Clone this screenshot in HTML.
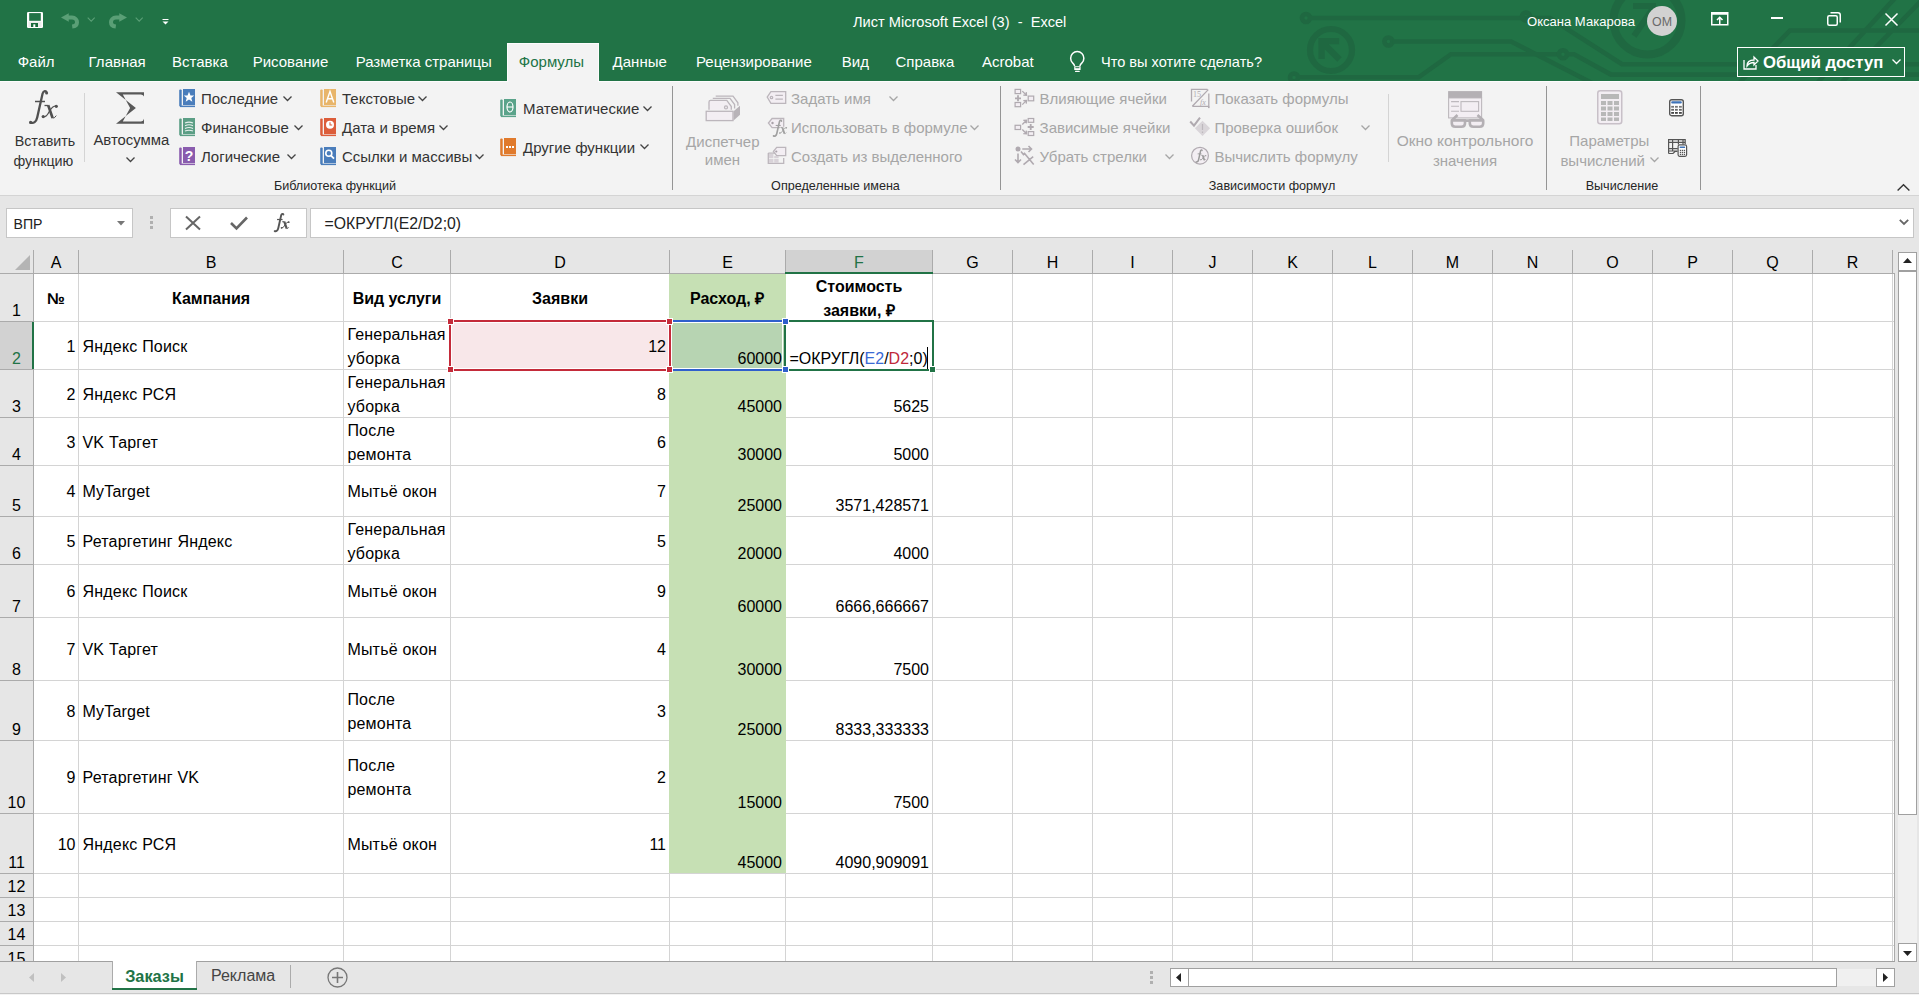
<!DOCTYPE html><html><head><meta charset="utf-8"><style>
*{margin:0;padding:0;box-sizing:border-box}
html,body{width:1919px;height:995px;overflow:hidden}
body{position:relative;background:#fff;font-family:"Liberation Sans",sans-serif;color:#000}
.a{position:absolute}
.t{position:absolute;white-space:pre;line-height:1}
svg{position:absolute;overflow:visible}
</style></head><body>
<div class="a" style="left:0px;top:0px;width:1919px;height:81px;background:#217346;"></div>
<div class="a" style="left:0px;top:81px;width:1919px;height:1px;background:#fdfcfd;"></div>
<div class="a" style="left:0px;top:82px;width:1919px;height:113px;background:#f3f3f3;"></div>
<div class="a" style="left:0px;top:195px;width:1919px;height:1px;background:#d4d4d4;"></div>
<div class="a" style="left:0px;top:196px;width:1919px;height:799px;background:#e6e6e6;"></div>
<svg style="left:0;top:0;overflow:hidden" width="1919" height="81"><g fill="none" stroke="#1f6841" stroke-width="4.6">
<circle cx="1306" cy="18" r="4"/><path d="M1310 18H1550L1622 64.2H1919"/><circle cx="1526" cy="16.5" r="4"/>
<circle cx="1331" cy="50" r="21" stroke-width="6.2"/>
<path d="M1321.6 38V59M1318.4 41.2H1339.2M1322 42L1339.5 59.5" stroke-width="6.3"/>
<circle cx="1647.5" cy="20.5" r="34" stroke-width="8"/>
<path d="M1633 6H1656M1654 7L1634 36" stroke-width="6"/>
<circle cx="1388.4" cy="41.5" r="4"/><path d="M1392.5 41.5H1511L1592 83"/>
<circle cx="1294" cy="77.5" r="4"/><path d="M1298 77.3H1418.6L1451 54.2H1558"/>
<circle cx="1563" cy="54.3" r="4"/><path d="M1567 54.3H1574L1611 74.6H1919"/>
<path d="M1740 82L1790 30.5H1919M1896 -3L1818 82M1922 0L1842 82"/>
</g></svg>
<svg style="left:27px;top:12px" width="16" height="16"><rect x="0" y="0" width="16" height="16" rx="1.2" fill="#fff"/><rect x="2.2" y="1.1" width="11.6" height="7.7" fill="#217346"/><rect x="1.5" y="9.6" width="13" height="5.3" fill="#ececec"/><rect x="4" y="11" width="7" height="4" fill="#1a6b3c"/><rect x="6.3" y="12.3" width="2" height="2.7" fill="#fff"/></svg>
<svg style="left:60px;top:12px" width="20" height="18"><path d="M1 5.5L8.75 1.3V9.8Z" fill="#5a9f76"/><path d="M7 5.6H12C15.3 5.6 17 8 17 10.2C17 12.6 15.4 14.2 12.2 14.6" fill="none" stroke="#5a9f76" stroke-width="4"/></svg>
<svg style="left:108px;top:12px" width="20" height="18"><g transform="translate(20,0) scale(-1,1)"><path d="M1 5.5L8.75 1.3V9.8Z" fill="#5a9f76"/><path d="M7 5.6H12C15.3 5.6 17 8 17 10.2C17 12.6 15.4 14.2 12.2 14.6" fill="none" stroke="#5a9f76" stroke-width="4"/></g></svg>
<svg style="left:87px;top:17px" width="9" height="6"><path d="M0.7 0.7L4.2 4.2L7.7 0.7" fill="none" stroke="#5a9f76" stroke-width="1.1"/></svg>
<svg style="left:135px;top:17px" width="9" height="6"><path d="M0.7 0.7L4.2 4.2L7.7 0.7" fill="none" stroke="#5a9f76" stroke-width="1.1"/></svg>
<svg style="left:162px;top:18px" width="8" height="8"><rect x="0.5" y="1" width="6" height="1" fill="#fff"/><path d="M0.5 3.5H6.5L3.5 6.5Z" fill="#fff"/></svg>
<div class="t" style="left:853px;top:14.64px;font-size:14.6px;color:#fff;font-weight:400;">Лист Microsoft Excel (3)  -  Excel</div>
<div class="t" style="left:1527px;top:14.95px;font-size:13.05px;color:#fff;font-weight:400;">Оксана Макарова</div>
<div class="a" style="left:1647px;top:6px;width:30px;height:30px;border-radius:50%;background:#d2d2d2"></div>
<div class="t" style="left:1262px;width:800px;top:15.50px;font-size:12.4px;color:#6a6a6a;font-weight:400;text-align:center;">OM</div>
<svg style="left:1711px;top:12px" width="18" height="14"><rect x="0.75" y="0.75" width="16" height="12" fill="none" stroke="#fff" stroke-width="1.5"/><rect x="0.75" y="0.75" width="16" height="2" fill="#fff"/><path d="M8.75 12.5V5.5M6 8L8.75 5.2L11.5 8" fill="none" stroke="#fff" stroke-width="1.5"/></svg>
<div class="a" style="left:1771px;top:17px;width:12px;height:1.5px;background:#fff;"></div>
<svg style="left:1827px;top:12px" width="14" height="14"><rect x="0.75" y="3.75" width="9.5" height="9.5" rx="1.5" fill="none" stroke="#fff" stroke-width="1.5"/><path d="M3.5 0.75H11Q13.25 0.75 13.25 3V10.5" fill="none" stroke="#fff" stroke-width="1.5"/></svg>
<svg style="left:1885px;top:13px" width="13" height="13"><path d="M0.5 0.5L12.5 12.5M12.5 0.5L0.5 12.5" stroke="#fff" stroke-width="1.5"/></svg>
<div class="a" style="left:507px;top:43px;width:92px;height:39px;background:#fdfcfd;"></div>
<div class="a" style="left:508px;top:44px;width:90px;height:38px;background:#f3f3f3;"></div>
<div class="t" style="left:17.7px;top:54.30px;font-size:15px;color:#fff;font-weight:400;">Файл</div>
<div class="t" style="left:88.6px;top:54.30px;font-size:15px;color:#fff;font-weight:400;">Главная</div>
<div class="t" style="left:172px;top:54.30px;font-size:15px;color:#fff;font-weight:400;">Вставка</div>
<div class="t" style="left:252.7px;top:54.30px;font-size:15px;color:#fff;font-weight:400;">Рисование</div>
<div class="t" style="left:355.7px;top:54.30px;font-size:15px;color:#fff;font-weight:400;">Разметка страницы</div>
<div class="t" style="left:518.8px;top:54.30px;font-size:15px;color:#217346;font-weight:400;">Формулы</div>
<div class="t" style="left:612.6px;top:54.30px;font-size:15px;color:#fff;font-weight:400;">Данные</div>
<div class="t" style="left:696px;top:54.30px;font-size:15px;color:#fff;font-weight:400;">Рецензирование</div>
<div class="t" style="left:841.8px;top:54.30px;font-size:15px;color:#fff;font-weight:400;">Вид</div>
<div class="t" style="left:895.5px;top:54.30px;font-size:15px;color:#fff;font-weight:400;">Справка</div>
<div class="t" style="left:982px;top:54.30px;font-size:15px;color:#fff;font-weight:400;">Acrobat</div>
<svg style="left:1068px;top:50px" width="19" height="23"><path d="M6.6 16.3Q6.5 14.6 4.6 12.9A6.6 6.6 0 1 1 13.9 12.9Q12 14.6 11.9 16.3" fill="none" stroke="#fff" stroke-width="1.5"/><rect x="6.2" y="16.2" width="6.4" height="3.7" rx="0.5" fill="#fff"/><rect x="7.4" y="17.2" width="4" height="1" fill="#217346"/><rect x="7" y="20.8" width="4.8" height="1.3" rx="0.6" fill="#fff"/></svg>
<div class="t" style="left:1101px;top:54.67px;font-size:14.57px;color:#fff;font-weight:400;">Что вы хотите сделать?</div>
<div class="a" style="left:1737px;top:47px;width:168px;height:30px;border:1px solid #fff;background:#217346"></div>
<svg style="left:1743px;top:54px" width="16" height="16"><path d="M1 6V15H13V11" fill="none" stroke="#fff" stroke-width="1.3"/><path d="M4 12Q4 6 11 6V3L15 7L11 11V8.5Q6.5 8.5 4 12Z" fill="none" stroke="#fff" stroke-width="1.3"/></svg>
<div class="t" style="left:1763px;top:55.16px;font-size:16.7px;color:#fff;font-weight:700;">Общий доступ</div>
<svg style="left:1892px;top:59px" width="9" height="6"><path d="M0.5 0.5L4.5 4.5L8.5 0.5" fill="none" stroke="#fff" stroke-width="1.3"/></svg>
<svg style="left:24px;top:86px" width="40" height="44"><g fill="none" stroke="#505050"><path d="M22.8 6.6C22 4.6 19.6 4.6 18.6 7.5L13.2 31.5C12.3 35.8 9.4 37.8 6.5 36.5" stroke-width="2.3"/><path d="M11 15.5H21" stroke-width="1.5"/><path d="M24.2 19.3L28.6 32" stroke-width="2.6"/><path d="M20.5 19.5H24.5" stroke-width="1.3"/><path d="M28.6 32Q30.2 32.8 32.3 29.6" stroke-width="1.0"/><path d="M32.5 19.8Q28.5 19.5 25.3 25.5Q22.5 31.2 19 31" stroke-width="1.2"/></g><g fill="#505050"><circle cx="22.6" cy="6.9" r="1.5"/><circle cx="6.6" cy="36.4" r="1.6"/><circle cx="32.3" cy="20.3" r="1.6"/><circle cx="19.2" cy="30.6" r="1.6"/></g></svg>
<div class="t" style="left:14.7px;top:133.90px;font-size:14.3px;color:#333333;font-weight:400;">Вставить</div>
<div class="t" style="left:13.5px;top:153.90px;font-size:14.3px;color:#333333;font-weight:400;">функцию</div>
<div class="a" style="left:84px;top:93px;width:1px;height:69px;background:#d4d4d4;"></div>
<svg style="left:116px;top:92px" width="29" height="32"><path d="M0 0.2H28V4.6Q27.5 2.6 25 2.4H6.8L14.1 15.9L6.8 29.4H25Q27.5 29.2 28 26.7V31.8H0L19.9 15.9Z" fill="#585858"/></svg>
<div class="t" style="left:93.4px;top:133.39px;font-size:14.9px;color:#333333;font-weight:400;">Автосумма</div>
<svg style="left:126px;top:157px" width="9" height="6"><path d="M0.5 0.5L4.5 4.5L8.5 0.5" fill="none" stroke="#444" stroke-width="1.3"/></svg>
<svg style="left:179px;top:89px" width="17" height="19"><rect x="0.2" y="0.5" width="2.5" height="17" rx="1" fill="#4a7dbb"/><rect x="4" y="0" width="12" height="16" fill="#4a7dbb"/><rect x="1" y="16.6" width="15" height="1.5" fill="#4a7dbb"/><path d="M10 2.8L11.5 6.4L15.2 6.6L12.3 9L13.3 12.7L10 10.6L6.7 12.7L7.7 9L4.8 6.6L8.5 6.4Z" fill="#fff"/></svg>
<div class="t" style="left:201px;top:91.30px;font-size:15px;color:#333333;font-weight:400;">Последние</div>
<svg style="left:283px;top:96px" width="9" height="6"><path d="M0.5 0.5L4.5 4.5L8.5 0.5" fill="none" stroke="#444" stroke-width="1.3"/></svg>
<svg style="left:179px;top:118px" width="17" height="19"><rect x="0.2" y="0.5" width="2.5" height="17" rx="1" fill="#5b9e85"/><rect x="4" y="0" width="12" height="16" fill="#5b9e85"/><rect x="1" y="16.6" width="15" height="1.5" fill="#5b9e85"/><g fill="none" stroke="#fff" stroke-width="1.1" opacity="0.85"><path d="M6 5Q10 3.2 14 5M6 7.7Q10 5.9 14 7.7M6 10.4Q10 8.6 14 10.4M6 13.1Q10 11.3 14 13.1"/></g></svg>
<div class="t" style="left:201px;top:120.30px;font-size:15px;color:#333333;font-weight:400;">Финансовые</div>
<svg style="left:294px;top:125px" width="9" height="6"><path d="M0.5 0.5L4.5 4.5L8.5 0.5" fill="none" stroke="#444" stroke-width="1.3"/></svg>
<svg style="left:179px;top:147px" width="17" height="19"><rect x="0.2" y="0.5" width="2.5" height="17" rx="1" fill="#8a5cae"/><rect x="4" y="0" width="12" height="16" fill="#8a5cae"/><rect x="1" y="16.6" width="15" height="1.5" fill="#8a5cae"/><text x="10" y="14" font-size="14" font-weight="700" fill="#fff" text-anchor="middle" font-family="Liberation Sans">?</text></svg>
<div class="t" style="left:201px;top:149.30px;font-size:15px;color:#333333;font-weight:400;">Логические</div>
<svg style="left:287px;top:154px" width="9" height="6"><path d="M0.5 0.5L4.5 4.5L8.5 0.5" fill="none" stroke="#444" stroke-width="1.3"/></svg>
<svg style="left:320px;top:89px" width="17" height="19"><rect x="0.2" y="0.5" width="2.5" height="17" rx="1" fill="#e8b56a"/><rect x="4" y="0" width="12" height="16" fill="#e8b56a"/><rect x="1" y="16.6" width="15" height="1.5" fill="#e8b56a"/><path d="M6.2 13.5L10 2.5L13.8 13.5M7.6 9.8H12.4" fill="none" stroke="#fff" stroke-width="1.4"/></svg>
<div class="t" style="left:342px;top:91.30px;font-size:15px;color:#333333;font-weight:400;">Текстовые</div>
<svg style="left:418px;top:96px" width="9" height="6"><path d="M0.5 0.5L4.5 4.5L8.5 0.5" fill="none" stroke="#444" stroke-width="1.3"/></svg>
<svg style="left:320px;top:118px" width="17" height="19"><rect x="0.2" y="0.5" width="2.5" height="17" rx="1" fill="#dc5d3a"/><rect x="4" y="0" width="12" height="16" fill="#dc5d3a"/><rect x="1" y="16.6" width="15" height="1.5" fill="#dc5d3a"/><circle cx="10" cy="6.8" r="4" fill="#fff"/><path d="M10 4.2V7H12.2" fill="none" stroke="#dc5d3a" stroke-width="1.1"/></svg>
<div class="t" style="left:342px;top:120.30px;font-size:15px;color:#333333;font-weight:400;">Дата и время</div>
<svg style="left:439px;top:125px" width="9" height="6"><path d="M0.5 0.5L4.5 4.5L8.5 0.5" fill="none" stroke="#444" stroke-width="1.3"/></svg>
<svg style="left:320px;top:147px" width="17" height="19"><rect x="0.2" y="0.5" width="2.5" height="17" rx="1" fill="#4a7dbb"/><rect x="4" y="0" width="12" height="16" fill="#4a7dbb"/><rect x="1" y="16.6" width="15" height="1.5" fill="#4a7dbb"/><circle cx="8.8" cy="6.3" r="3" fill="none" stroke="#fff" stroke-width="1.6"/><path d="M10.8 8.4L14 11.6" stroke="#fff" stroke-width="1.8"/></svg>
<div class="t" style="left:342px;top:149.30px;font-size:15px;color:#333333;font-weight:400;">Ссылки и массивы</div>
<svg style="left:475px;top:154px" width="9" height="6"><path d="M0.5 0.5L4.5 4.5L8.5 0.5" fill="none" stroke="#444" stroke-width="1.3"/></svg>
<svg style="left:500px;top:99px" width="17" height="19"><rect x="0.2" y="0.5" width="2.5" height="17" rx="1" fill="#5aa38a"/><rect x="4" y="0" width="12" height="16" fill="#5aa38a"/><rect x="1" y="16.6" width="15" height="1.5" fill="#5aa38a"/><ellipse cx="10" cy="8" rx="3" ry="5" fill="none" stroke="#fff" stroke-width="1.2"/><path d="M7 8H13" stroke="#fff" stroke-width="1.1"/></svg>
<div class="t" style="left:523px;top:101.30px;font-size:15px;color:#333333;font-weight:400;">Математические</div>
<svg style="left:643px;top:106px" width="9" height="6"><path d="M0.5 0.5L4.5 4.5L8.5 0.5" fill="none" stroke="#444" stroke-width="1.3"/></svg>
<svg style="left:500px;top:138px" width="17" height="19"><rect x="0.2" y="0.5" width="2.5" height="17" rx="1" fill="#e07a2c"/><rect x="4" y="0" width="12" height="16" fill="#e07a2c"/><rect x="1" y="16.6" width="15" height="1.5" fill="#e07a2c"/><path d="M6 8h2v2h-2zM9 8h2v2h-2zM12 8h2v2h-2z" fill="#fff"/></svg>
<div class="t" style="left:523px;top:139.80px;font-size:15px;color:#333333;font-weight:400;">Другие функции</div>
<svg style="left:640px;top:144px" width="9" height="6"><path d="M0.5 0.5L4.5 4.5L8.5 0.5" fill="none" stroke="#444" stroke-width="1.3"/></svg>
<div class="t" style="left:-65px;width:800px;top:180.33px;font-size:12.6px;color:#262626;font-weight:400;text-align:center;">Библиотека функций</div>
<div class="a" style="left:672px;top:86px;width:1px;height:104px;background:#959595;"></div>
<svg style="left:700px;top:88px" width="45" height="36"><g fill="none" stroke="#bcb6bc" stroke-width="1.3">
<path d="M15.7 8.2H33L37.9 14.8V17.7"/><path d="M12.8 10.3H30L34.6 16.5V20.6"/>
<path d="M9 21.8V14Q9 12.4 10.6 12.4H26.8L31.3 18.5V21.8" fill="#f3eef3"/><circle cx="26" cy="19.4" r="1.5"/>
<rect x="6.2" y="23.3" width="26.8" height="9.3" fill="#f3eef3"/></g><path d="M33.6 23.3L40 17.7V26.8L33.6 32.6Z" fill="#b8b3b8"/></svg>
<div class="t" style="left:322.79999999999995px;width:800px;top:133.60px;font-size:15px;color:#a6a6a6;font-weight:400;text-align:center;">Диспетчер</div>
<div class="t" style="left:322.5px;width:800px;top:152.30px;font-size:15px;color:#a6a6a6;font-weight:400;text-align:center;">имен</div>
<svg style="left:700px;top:88px" width="90" height="80"><g stroke="#bcb6bc" stroke-width="1.3">
<path d="M67.2 9.1L70.9 3.7H85.7V15.3H70.9Z" fill="#f3eef3"/><circle cx="71.5" cy="9.5" r="1.2" fill="none"/><path d="M75.4 7.4H82.9M75.4 11.1H82.9"/>
<path d="M80 39.6H72.1L68.4 35L72.1 30.5H83.7V38.7" fill="#f3eef3"/>
<path d="M68.3 65.1H76M68.3 65.1V75.4H83.7V70" fill="none"/>
<path d="M73.4 63.5L76.7 59.4H85.7V67.6H76.7Z" fill="#f3eef3"/></g>
<circle cx="72.5" cy="35" r="1.2" fill="#a8a0a8"/><circle cx="76.3" cy="63.5" r="1.1" fill="#a8a0a8"/>
<g fill="#d8d2d8"><rect x="69" y="65.8" width="4.4" height="4.4"/><rect x="74.2" y="68" width="4.4" height="2.2"/><rect x="69" y="71" width="4.4" height="3.8"/><rect x="74.2" y="71" width="4.4" height="3.8"/></g>
<g transform="translate(70.2,29.7) scale(0.5)"><g fill="none" stroke="#a0a0a0"><path d="M22.8 6.6C22 4.6 19.6 4.6 18.6 7.5L13.2 31.5C12.3 35.8 9.4 37.8 6.5 36.5" stroke-width="3.2199999999999998"/><path d="M11 15.5H21" stroke-width="2.0999999999999996"/><path d="M24.2 19.3L28.6 32" stroke-width="3.6399999999999997"/><path d="M20.5 19.5H24.5" stroke-width="1.8199999999999998"/><path d="M28.6 32Q30.2 32.8 32.3 29.6" stroke-width="1.4"/><path d="M32.5 19.8Q28.5 19.5 25.3 25.5Q22.5 31.2 19 31" stroke-width="1.68"/></g><g fill="#a0a0a0"><circle cx="22.6" cy="6.9" r="1.5"/><circle cx="6.6" cy="36.4" r="1.6"/><circle cx="32.3" cy="20.3" r="1.6"/><circle cx="19.2" cy="30.6" r="1.6"/></g></g></svg>
<div class="t" style="left:791px;top:91.30px;font-size:15px;color:#a6a6a6;font-weight:400;">Задать имя</div>
<svg style="left:889px;top:96px" width="9" height="6"><path d="M0.5 0.5L4.5 4.5L8.5 0.5" fill="none" stroke="#a6a6a6" stroke-width="1.3"/></svg>
<div class="t" style="left:791px;top:120.30px;font-size:15px;color:#a6a6a6;font-weight:400;">Использовать в формуле</div>
<svg style="left:970px;top:125px" width="9" height="6"><path d="M0.5 0.5L4.5 4.5L8.5 0.5" fill="none" stroke="#a6a6a6" stroke-width="1.3"/></svg>
<div class="t" style="left:791px;top:149.30px;font-size:15px;color:#a6a6a6;font-weight:400;">Создать из выделенного</div>
<div class="t" style="left:435.5px;width:800px;top:180.33px;font-size:12.6px;color:#262626;font-weight:400;text-align:center;">Определенные имена</div>
<div class="a" style="left:1000px;top:86px;width:1px;height:104px;background:#959595;"></div>
<svg style="left:1010px;top:86px" width="30" height="84"><g fill="#f3eef3" stroke="#b0aab0" stroke-width="1.2">
<rect x="5.1" y="3.4" width="5.5" height="4.2"/><rect x="5.1" y="16.5" width="5.5" height="4.2"/><rect x="18.2" y="10.1" width="5.5" height="4.7"/>
<rect x="5.1" y="39.3" width="5.5" height="4.2"/><rect x="18.2" y="32.5" width="5.5" height="3.8"/><rect x="18.2" y="45.6" width="5.5" height="3.9"/></g>
<g fill="none" stroke="#b0aab0" stroke-width="1.3">
<path d="M12.3 5.1L16.5 9.3M13.31 9.03L16.5 9.3L16.23 6.11"/><path d="M12.3 18.6L16.5 14.4M16.23 17.59L16.5 14.4L13.31 14.67"/>
<path d="M12.3 38.5L16.5 34.2M16.23 37.39L16.5 34.2L13.31 34.47"/><path d="M12.3 43.5L16.5 47.8M13.31 47.53L16.5 47.8L16.23 44.61"/>
</g><g stroke="#b0aab0" stroke-width="1.8" fill="none"><path d="M5 12.3H11M8 9.3V15.3"/><path d="M17.7 41H23.7M20.7 38V44"/>
<path d="M12.3 63H21.5M18.5 60L21.5 63L18.5 66M8 67.6V76.5M5 73.5L8 76.5L11 73.5M11 65.5L14 69.3M13.5 78.6L23.2 70.6M14 66.8L23.7 78.6" stroke-width="1.6"/></g>
<circle cx="8" cy="63" r="2.5" fill="#b0aab0"/></svg>
<div class="t" style="left:1039.6px;top:91.30px;font-size:15px;color:#a6a6a6;font-weight:400;">Влияющие ячейки</div>
<div class="t" style="left:1039.6px;top:120.30px;font-size:15px;color:#a6a6a6;font-weight:400;">Зависимые ячейки</div>
<div class="t" style="left:1039.6px;top:149.30px;font-size:15px;color:#a6a6a6;font-weight:400;">Убрать стрелки</div>
<svg style="left:1165px;top:154px" width="9" height="6"><path d="M0.5 0.5L4.5 4.5L8.5 0.5" fill="none" stroke="#a6a6a6" stroke-width="1.3"/></svg>
<svg style="left:1186px;top:86px" width="30" height="84"><g fill="none" stroke="#b0aab0" stroke-width="1.3">
<path d="M5.5 15.6V3.4H21.5M6.3 20.3H22.8V7.6M6.3 20.3L22.3 3.6"/></g>
<text x="7" y="11" font-size="8" fill="#b0aab0" font-family="Liberation Serif">15</text>
<text x="14" y="18.5" font-size="8" font-style="italic" fill="#b0aab0" font-family="Liberation Serif">fx</text>
<rect x="22" y="20.5" width="1.6" height="1.6" fill="#b0aab0"/>
<path d="M4.2 35.5L8 39.7L14 31.7" fill="none" stroke="#b0aab0" stroke-width="2"/>
<path d="M16.5 34.7L24.1 42.3L16.5 49.9L8.9 42.3Z" fill="#d9d5d9"/><path d="M16.5 38V44M16.5 45.6V47" stroke="#bdb8bd" stroke-width="1.2"/>
<circle cx="14" cy="69.7" r="8.4" fill="#f3eef3" stroke="#b0aab0" stroke-width="1.2"/>
<g transform="translate(7.5,62) scale(0.38)"><g fill="none" stroke="#9a9a9a"><path d="M22.8 6.6C22 4.6 19.6 4.6 18.6 7.5L13.2 31.5C12.3 35.8 9.4 37.8 6.5 36.5" stroke-width="3.9099999999999997"/><path d="M11 15.5H21" stroke-width="2.55"/><path d="M24.2 19.3L28.6 32" stroke-width="4.42"/><path d="M20.5 19.5H24.5" stroke-width="2.21"/><path d="M28.6 32Q30.2 32.8 32.3 29.6" stroke-width="1.7"/><path d="M32.5 19.8Q28.5 19.5 25.3 25.5Q22.5 31.2 19 31" stroke-width="2.04"/></g><g fill="#9a9a9a"><circle cx="22.6" cy="6.9" r="1.5"/><circle cx="6.6" cy="36.4" r="1.6"/><circle cx="32.3" cy="20.3" r="1.6"/><circle cx="19.2" cy="30.6" r="1.6"/></g></g></svg>
<div class="t" style="left:1214.4px;top:91.30px;font-size:15px;color:#a6a6a6;font-weight:400;">Показать формулы</div>
<div class="t" style="left:1214.4px;top:120.30px;font-size:15px;color:#a6a6a6;font-weight:400;">Проверка ошибок</div>
<svg style="left:1361px;top:125px" width="9" height="6"><path d="M0.5 0.5L4.5 4.5L8.5 0.5" fill="none" stroke="#a6a6a6" stroke-width="1.3"/></svg>
<div class="t" style="left:1214.4px;top:149.30px;font-size:15px;color:#a6a6a6;font-weight:400;">Вычислить формулу</div>
<div class="t" style="left:872px;width:800px;top:180.33px;font-size:12.6px;color:#262626;font-weight:400;text-align:center;">Зависимости формул</div>
<div class="a" style="left:1388px;top:94px;width:1px;height:68px;background:#d4d4d4;"></div>
<svg style="left:1440px;top:86px" width="50" height="44"><rect x="8.6" y="11.9" width="33" height="20" fill="#f3eef3" stroke="#bdb8bd" stroke-width="1.1"/><rect x="8.1" y="5.1" width="34" height="6.8" fill="#b4b0b4"/><path d="M11.1 15.6H19M11.1 20.3H19M11.1 25.3H19" stroke="#bdb8bd" stroke-width="1.1"/><rect x="21" y="15.6" width="17.6" height="9.7" fill="none" stroke="#bdb8bd" stroke-width="1.1"/><g fill="#f3eef3" stroke="#b4b0b4" stroke-width="2.6" stroke-linejoin="round"><path d="M17.5 29L12 34.2M37.5 29L43.2 34.2M25 34.6H29.8" fill="none"/><path d="M11.8 34.4H25V37.2Q25 40.8 21.4 40.8H15.4Q11.8 40.8 11.8 37.2Z"/><path d="M29.8 34.4H43.2V37.2Q43.2 40.8 39.6 40.8H33.4Q29.8 40.8 29.8 37.2Z"/></g></svg>
<div class="t" style="left:1065px;width:800px;top:132.88px;font-size:15.5px;color:#a6a6a6;font-weight:400;text-align:center;">Окно контрольного</div>
<div class="t" style="left:1065px;width:800px;top:153.00px;font-size:15px;color:#a6a6a6;font-weight:400;text-align:center;">значения</div>
<div class="a" style="left:1546px;top:86px;width:1px;height:104px;background:#959595;"></div>
<svg style="left:1597px;top:90px" width="26" height="35"><rect x="0.75" y="0.75" width="24" height="33" rx="2.5" fill="#f3eef3" stroke="#c8c0c8" stroke-width="1.5"/><rect x="4" y="4" width="18" height="5" fill="#b8b8b8"/><g fill="#b8b8b8"><rect x="4" y="11" width="5" height="4"/><rect x="10.5" y="11" width="5" height="4"/><rect x="17" y="11" width="5" height="4"/><rect x="4" y="16.5" width="5" height="4"/><rect x="10.5" y="16.5" width="5" height="4"/><rect x="17" y="16.5" width="5" height="4"/><rect x="4" y="22" width="5" height="4"/><rect x="10.5" y="22" width="5" height="4"/><rect x="17" y="22" width="5" height="4"/><rect x="4" y="27.5" width="5" height="3.5"/><rect x="10.5" y="27.5" width="5" height="3.5"/><rect x="17" y="27.5" width="5" height="3.5"/></g></svg>
<div class="t" style="left:1209.3px;width:800px;top:133.30px;font-size:15px;color:#a6a6a6;font-weight:400;text-align:center;">Параметры</div>
<div class="t" style="left:1202.7px;width:800px;top:153.30px;font-size:15px;color:#a6a6a6;font-weight:400;text-align:center;">вычислений</div>
<svg style="left:1650px;top:157px" width="9" height="6"><path d="M0.5 0.5L4.5 4.5L8.5 0.5" fill="none" stroke="#a6a6a6" stroke-width="1.3"/></svg>
<svg style="left:1669px;top:99px" width="16" height="18"><rect x="0.7" y="0.7" width="13.6" height="16" rx="2" fill="#fff" stroke="#555" stroke-width="1.4"/><rect x="2.2" y="2.2" width="10.6" height="2.4" rx="1" fill="#3e73b8"/><rect x="2.2" y="6.9" width="2.8" height="1.8" fill="#777"/><rect x="6" y="6.9" width="2.8" height="1.8" fill="#777"/><rect x="10" y="6.9" width="2.8" height="1.8" fill="#777"/><rect x="2.2" y="9.9" width="2.8" height="1.8" fill="#666"/><rect x="6" y="9.9" width="2.8" height="1.8" fill="#666"/><rect x="10" y="9.9" width="2.8" height="1.8" fill="#666"/><rect x="2.2" y="13" width="2.8" height="1.8" fill="#444"/><rect x="6" y="13" width="2.8" height="1.8" fill="#444"/><rect x="10" y="13" width="2.8" height="1.8" fill="#444"/></svg>
<svg style="left:1668px;top:138px" width="21" height="20"><g fill="none" stroke="#555" stroke-width="1.2"><path d="M0.6 15.5V1.6H17.2V6M4.6 1.6V13M10.4 1.6V6.5M15 1.6V6.5M0.6 4.3H17.2M0.6 10.6H9.8M0.6 13H9.5M0.6 15.5H5L7 13.5H9.5"/></g><rect x="10.1" y="6.9" width="8.5" height="11.4" rx="1.5" fill="#fff" stroke="#555" stroke-width="1.2"/><rect x="11.6" y="8.5" width="5.5" height="1.6" rx="0.6" fill="#3e73b8"/><rect x="11.8" y="11.8" width="1.3" height="1.3" fill="#555"/><rect x="13.8" y="11.8" width="1.3" height="1.3" fill="#555"/><rect x="15.8" y="11.8" width="1.3" height="1.3" fill="#555"/><rect x="11.8" y="13.8" width="1.3" height="1.3" fill="#555"/><rect x="13.8" y="13.8" width="1.3" height="1.3" fill="#555"/><rect x="15.8" y="13.8" width="1.3" height="1.3" fill="#555"/><rect x="11.8" y="15.8" width="1.3" height="1.3" fill="#555"/><rect x="13.8" y="15.8" width="1.3" height="1.3" fill="#555"/><rect x="15.8" y="15.8" width="1.3" height="1.3" fill="#555"/></svg>
<div class="t" style="left:1222px;width:800px;top:180.33px;font-size:12.6px;color:#262626;font-weight:400;text-align:center;">Вычисление</div>
<div class="a" style="left:1700px;top:86px;width:1px;height:104px;background:#959595;"></div>
<svg style="left:1897px;top:184px" width="13" height="7"><path d="M0.6 6.4L6.5 0.8L12.4 6.4" fill="none" stroke="#333" stroke-width="1.4"/></svg>
<div class="a" style="left:6px;top:208px;width:127px;height:30px;background:#fff;border:1px solid #c6c6c6"></div>
<div class="t" style="left:13.6px;top:217.06px;font-size:14.1px;color:#222;font-weight:400;">ВПР</div>
<svg style="left:117px;top:221px" width="8" height="5"><path d="M0 0H8L4 4.5Z" fill="#777"/></svg>
<div class="a" style="left:150px;top:216px;width:3px;height:3px;background:#b0b0b0;"></div>
<div class="a" style="left:150px;top:221px;width:3px;height:3px;background:#b0b0b0;"></div>
<div class="a" style="left:150px;top:226px;width:3px;height:3px;background:#b0b0b0;"></div>
<div class="a" style="left:170px;top:208px;width:137px;height:30px;background:#fff;border:1px solid #c6c6c6"></div>
<svg style="left:185px;top:216px" width="16" height="14"><path d="M1 0.5L15 13.5M15 0.5L1 13.5" stroke="#666" stroke-width="2"/></svg>
<svg style="left:230px;top:216px" width="18" height="14"><path d="M1 7L6.5 12.5L17 1.5" fill="none" stroke="#666" stroke-width="2.6"/></svg>
<svg style="left:272px;top:212px" width="20" height="22"><g transform="translate(-1,-1) scale(0.55)"><g fill="none" stroke="#555"><path d="M22.8 6.6C22 4.6 19.6 4.6 18.6 7.5L13.2 31.5C12.3 35.8 9.4 37.8 6.5 36.5" stroke-width="3.4499999999999997"/><path d="M11 15.5H21" stroke-width="2.25"/><path d="M24.2 19.3L28.6 32" stroke-width="3.9000000000000004"/><path d="M20.5 19.5H24.5" stroke-width="1.9500000000000002"/><path d="M28.6 32Q30.2 32.8 32.3 29.6" stroke-width="1.5"/><path d="M32.5 19.8Q28.5 19.5 25.3 25.5Q22.5 31.2 19 31" stroke-width="1.7999999999999998"/></g><g fill="#555"><circle cx="22.6" cy="6.9" r="1.5"/><circle cx="6.6" cy="36.4" r="1.6"/><circle cx="32.3" cy="20.3" r="1.6"/><circle cx="19.2" cy="30.6" r="1.6"/></g></g></svg>
<div class="a" style="left:310px;top:208px;width:1604px;height:30px;background:#fff;border:1px solid #c6c6c6"></div>
<div class="t" style="left:324.5px;top:215.63px;font-size:15.8px;color:#222;font-weight:400;">=ОКРУГЛ(E2/D2;0)</div>
<svg style="left:1899px;top:219px" width="10" height="7"><path d="M0.8 0.8L5 5L9.2 0.8" fill="none" stroke="#666" stroke-width="1.8"/></svg>
<div class="a" style="left:34px;top:274px;width:1860px;height:687px;background:#fff;"></div>
<div class="a" style="left:0px;top:250px;width:1894px;height:23px;background:#e6e6e6;"></div>
<div class="a" style="left:0px;top:274px;width:33px;height:687px;background:#e6e6e6;"></div>
<div class="a" style="left:786px;top:250px;width:146px;height:23px;background:#d2d2d2;"></div>
<div class="a" style="left:0px;top:322px;width:33px;height:47px;background:#d2d2d2;"></div>
<div class="a" style="left:78px;top:274px;width:1px;height:687px;background:#d4d4d4;"></div>
<div class="a" style="left:343px;top:274px;width:1px;height:687px;background:#d4d4d4;"></div>
<div class="a" style="left:450px;top:274px;width:1px;height:687px;background:#d4d4d4;"></div>
<div class="a" style="left:669px;top:274px;width:1px;height:687px;background:#d4d4d4;"></div>
<div class="a" style="left:785px;top:274px;width:1px;height:687px;background:#d4d4d4;"></div>
<div class="a" style="left:932px;top:274px;width:1px;height:687px;background:#d4d4d4;"></div>
<div class="a" style="left:1012px;top:274px;width:1px;height:687px;background:#d4d4d4;"></div>
<div class="a" style="left:1092px;top:274px;width:1px;height:687px;background:#d4d4d4;"></div>
<div class="a" style="left:1172px;top:274px;width:1px;height:687px;background:#d4d4d4;"></div>
<div class="a" style="left:1252px;top:274px;width:1px;height:687px;background:#d4d4d4;"></div>
<div class="a" style="left:1332px;top:274px;width:1px;height:687px;background:#d4d4d4;"></div>
<div class="a" style="left:1412px;top:274px;width:1px;height:687px;background:#d4d4d4;"></div>
<div class="a" style="left:1492px;top:274px;width:1px;height:687px;background:#d4d4d4;"></div>
<div class="a" style="left:1572px;top:274px;width:1px;height:687px;background:#d4d4d4;"></div>
<div class="a" style="left:1652px;top:274px;width:1px;height:687px;background:#d4d4d4;"></div>
<div class="a" style="left:1732px;top:274px;width:1px;height:687px;background:#d4d4d4;"></div>
<div class="a" style="left:1812px;top:274px;width:1px;height:687px;background:#d4d4d4;"></div>
<div class="a" style="left:1892px;top:274px;width:1px;height:687px;background:#d4d4d4;"></div>
<div class="a" style="left:34px;top:321px;width:1860px;height:1px;background:#d4d4d4;"></div>
<div class="a" style="left:34px;top:369px;width:1860px;height:1px;background:#d4d4d4;"></div>
<div class="a" style="left:34px;top:417px;width:1860px;height:1px;background:#d4d4d4;"></div>
<div class="a" style="left:34px;top:465px;width:1860px;height:1px;background:#d4d4d4;"></div>
<div class="a" style="left:34px;top:516px;width:1860px;height:1px;background:#d4d4d4;"></div>
<div class="a" style="left:34px;top:564px;width:1860px;height:1px;background:#d4d4d4;"></div>
<div class="a" style="left:34px;top:617px;width:1860px;height:1px;background:#d4d4d4;"></div>
<div class="a" style="left:34px;top:680px;width:1860px;height:1px;background:#d4d4d4;"></div>
<div class="a" style="left:34px;top:740px;width:1860px;height:1px;background:#d4d4d4;"></div>
<div class="a" style="left:34px;top:813px;width:1860px;height:1px;background:#d4d4d4;"></div>
<div class="a" style="left:34px;top:873px;width:1860px;height:1px;background:#d4d4d4;"></div>
<div class="a" style="left:34px;top:897px;width:1860px;height:1px;background:#d4d4d4;"></div>
<div class="a" style="left:34px;top:921px;width:1860px;height:1px;background:#d4d4d4;"></div>
<div class="a" style="left:34px;top:945px;width:1860px;height:1px;background:#d4d4d4;"></div>
<div class="a" style="left:78px;top:250px;width:1px;height:23px;background:#ababab;"></div>
<div class="a" style="left:343px;top:250px;width:1px;height:23px;background:#ababab;"></div>
<div class="a" style="left:450px;top:250px;width:1px;height:23px;background:#ababab;"></div>
<div class="a" style="left:669px;top:250px;width:1px;height:23px;background:#ababab;"></div>
<div class="a" style="left:785px;top:250px;width:1px;height:23px;background:#ababab;"></div>
<div class="a" style="left:932px;top:250px;width:1px;height:23px;background:#ababab;"></div>
<div class="a" style="left:1012px;top:250px;width:1px;height:23px;background:#ababab;"></div>
<div class="a" style="left:1092px;top:250px;width:1px;height:23px;background:#ababab;"></div>
<div class="a" style="left:1172px;top:250px;width:1px;height:23px;background:#ababab;"></div>
<div class="a" style="left:1252px;top:250px;width:1px;height:23px;background:#ababab;"></div>
<div class="a" style="left:1332px;top:250px;width:1px;height:23px;background:#ababab;"></div>
<div class="a" style="left:1412px;top:250px;width:1px;height:23px;background:#ababab;"></div>
<div class="a" style="left:1492px;top:250px;width:1px;height:23px;background:#ababab;"></div>
<div class="a" style="left:1572px;top:250px;width:1px;height:23px;background:#ababab;"></div>
<div class="a" style="left:1652px;top:250px;width:1px;height:23px;background:#ababab;"></div>
<div class="a" style="left:1732px;top:250px;width:1px;height:23px;background:#ababab;"></div>
<div class="a" style="left:1812px;top:250px;width:1px;height:23px;background:#ababab;"></div>
<div class="a" style="left:1892px;top:250px;width:1px;height:23px;background:#ababab;"></div>
<div class="a" style="left:0px;top:321px;width:33px;height:1px;background:#ababab;"></div>
<div class="a" style="left:0px;top:369px;width:33px;height:1px;background:#ababab;"></div>
<div class="a" style="left:0px;top:417px;width:33px;height:1px;background:#ababab;"></div>
<div class="a" style="left:0px;top:465px;width:33px;height:1px;background:#ababab;"></div>
<div class="a" style="left:0px;top:516px;width:33px;height:1px;background:#ababab;"></div>
<div class="a" style="left:0px;top:564px;width:33px;height:1px;background:#ababab;"></div>
<div class="a" style="left:0px;top:617px;width:33px;height:1px;background:#ababab;"></div>
<div class="a" style="left:0px;top:680px;width:33px;height:1px;background:#ababab;"></div>
<div class="a" style="left:0px;top:740px;width:33px;height:1px;background:#ababab;"></div>
<div class="a" style="left:0px;top:813px;width:33px;height:1px;background:#ababab;"></div>
<div class="a" style="left:0px;top:873px;width:33px;height:1px;background:#ababab;"></div>
<div class="a" style="left:0px;top:897px;width:33px;height:1px;background:#ababab;"></div>
<div class="a" style="left:0px;top:921px;width:33px;height:1px;background:#ababab;"></div>
<div class="a" style="left:0px;top:945px;width:33px;height:1px;background:#ababab;"></div>
<div class="a" style="left:0px;top:273px;width:1894px;height:1px;background:#ababab;"></div>
<div class="a" style="left:33px;top:250px;width:1px;height:711px;background:#ababab;"></div>
<div class="a" style="left:1894px;top:273px;width:1px;height:688px;background:#ababab;"></div>
<div class="a" style="left:669px;top:274px;width:117px;height:599px;background:#c6e0b4;"></div>
<svg style="left:0;top:250px" width="33" height="23"><polygon points="30,5 30,20 15,20" fill="#b4b4b4"/></svg>
<div class="t" style="left:-344.0px;width:800px;top:255.46px;font-size:16px;color:#000;font-weight:400;text-align:center;">A</div>
<div class="t" style="left:-189.0px;width:800px;top:255.46px;font-size:16px;color:#000;font-weight:400;text-align:center;">B</div>
<div class="t" style="left:-3.0px;width:800px;top:255.46px;font-size:16px;color:#000;font-weight:400;text-align:center;">C</div>
<div class="t" style="left:160.0px;width:800px;top:255.46px;font-size:16px;color:#000;font-weight:400;text-align:center;">D</div>
<div class="t" style="left:327.5px;width:800px;top:255.46px;font-size:16px;color:#000;font-weight:400;text-align:center;">E</div>
<div class="t" style="left:459.0px;width:800px;top:255.46px;font-size:16px;color:#217346;font-weight:400;text-align:center;">F</div>
<div class="t" style="left:572.5px;width:800px;top:255.46px;font-size:16px;color:#000;font-weight:400;text-align:center;">G</div>
<div class="t" style="left:652.5px;width:800px;top:255.46px;font-size:16px;color:#000;font-weight:400;text-align:center;">H</div>
<div class="t" style="left:732.5px;width:800px;top:255.46px;font-size:16px;color:#000;font-weight:400;text-align:center;">I</div>
<div class="t" style="left:812.5px;width:800px;top:255.46px;font-size:16px;color:#000;font-weight:400;text-align:center;">J</div>
<div class="t" style="left:892.5px;width:800px;top:255.46px;font-size:16px;color:#000;font-weight:400;text-align:center;">K</div>
<div class="t" style="left:972.5px;width:800px;top:255.46px;font-size:16px;color:#000;font-weight:400;text-align:center;">L</div>
<div class="t" style="left:1052.5px;width:800px;top:255.46px;font-size:16px;color:#000;font-weight:400;text-align:center;">M</div>
<div class="t" style="left:1132.5px;width:800px;top:255.46px;font-size:16px;color:#000;font-weight:400;text-align:center;">N</div>
<div class="t" style="left:1212.5px;width:800px;top:255.46px;font-size:16px;color:#000;font-weight:400;text-align:center;">O</div>
<div class="t" style="left:1292.5px;width:800px;top:255.46px;font-size:16px;color:#000;font-weight:400;text-align:center;">P</div>
<div class="t" style="left:1372.5px;width:800px;top:255.46px;font-size:16px;color:#000;font-weight:400;text-align:center;">Q</div>
<div class="t" style="left:1452.5px;width:800px;top:255.46px;font-size:16px;color:#000;font-weight:400;text-align:center;">R</div>
<div class="a" style="left:785px;top:272px;width:148px;height:2px;background:#217346;"></div>
<div class="a" style="left:32px;top:322px;width:2px;height:47px;background:#217346;"></div>
<div class="t" style="left:-383.5px;width:800px;top:303.46px;font-size:16px;color:#000;font-weight:400;text-align:center;">1</div>
<div class="t" style="left:-383.5px;width:800px;top:351.46px;font-size:16px;color:#217346;font-weight:400;text-align:center;">2</div>
<div class="t" style="left:-383.5px;width:800px;top:399.46px;font-size:16px;color:#000;font-weight:400;text-align:center;">3</div>
<div class="t" style="left:-383.5px;width:800px;top:447.46px;font-size:16px;color:#000;font-weight:400;text-align:center;">4</div>
<div class="t" style="left:-383.5px;width:800px;top:498.46px;font-size:16px;color:#000;font-weight:400;text-align:center;">5</div>
<div class="t" style="left:-383.5px;width:800px;top:546.46px;font-size:16px;color:#000;font-weight:400;text-align:center;">6</div>
<div class="t" style="left:-383.5px;width:800px;top:599.46px;font-size:16px;color:#000;font-weight:400;text-align:center;">7</div>
<div class="t" style="left:-383.5px;width:800px;top:662.46px;font-size:16px;color:#000;font-weight:400;text-align:center;">8</div>
<div class="t" style="left:-383.5px;width:800px;top:722.46px;font-size:16px;color:#000;font-weight:400;text-align:center;">9</div>
<div class="t" style="left:-383.5px;width:800px;top:795.46px;font-size:16px;color:#000;font-weight:400;text-align:center;">10</div>
<div class="t" style="left:-383.5px;width:800px;top:855.46px;font-size:16px;color:#000;font-weight:400;text-align:center;">11</div>
<div class="t" style="left:-383.5px;width:800px;top:879.46px;font-size:16px;color:#000;font-weight:400;text-align:center;">12</div>
<div class="t" style="left:-383.5px;width:800px;top:903.46px;font-size:16px;color:#000;font-weight:400;text-align:center;">13</div>
<div class="t" style="left:-383.5px;width:800px;top:927.46px;font-size:16px;color:#000;font-weight:400;text-align:center;">14</div>
<div class="t" style="left:-383.5px;width:800px;top:951.46px;font-size:16px;color:#000;font-weight:400;text-align:center;">15</div>
<div class="t" style="left:-344px;width:800px;top:290.96px;font-size:16px;color:#000;font-weight:700;text-align:center;">№</div>
<div class="t" style="left:-189px;width:800px;top:290.96px;font-size:16px;color:#000;font-weight:700;text-align:center;">Кампания</div>
<div class="t" style="left:-3px;width:800px;top:290.96px;font-size:16px;color:#000;font-weight:700;text-align:center;">Вид услуги</div>
<div class="t" style="left:160px;width:800px;top:290.96px;font-size:16px;color:#000;font-weight:700;text-align:center;">Заявки</div>
<div class="t" style="left:327px;width:800px;top:290.96px;font-size:16px;color:#000;font-weight:700;text-align:center;">Расход, ₽</div>
<div class="t" style="left:459px;width:800px;top:279.46px;font-size:16px;color:#000;font-weight:700;text-align:center;">Стоимость</div>
<div class="t" style="left:459px;width:800px;top:303.46px;font-size:16px;color:#000;font-weight:700;text-align:center;">заявки, ₽</div>
<div class="a" style="left:451px;top:322px;width:218px;height:47px;background:#f8e7e9;"></div>
<div class="a" style="left:671px;top:322px;width:113px;height:47px;background:#b7d4b2;"></div>
<div class="t" style="right:1843.5px;top:338.96px;font-size:16px;color:#000;font-weight:400;text-align:right;">1</div>
<div class="t" style="left:82.5px;top:338.96px;font-size:16px;color:#000;font-weight:400;letter-spacing:0.2px">Яндекс Поиск</div>
<div class="t" style="left:347.4px;top:326.96px;font-size:16px;color:#000;font-weight:400;letter-spacing:0.2px">Генеральная</div>
<div class="t" style="left:347.4px;top:350.96px;font-size:16px;color:#000;font-weight:400;letter-spacing:0.2px">уборка</div>
<div class="t" style="right:1253px;top:338.96px;font-size:16px;color:#000;font-weight:400;text-align:right;">12</div>
<div class="t" style="right:1137px;top:350.96px;font-size:16px;color:#000;font-weight:400;text-align:right;">60000</div>
<div class="t" style="right:1843.5px;top:386.96px;font-size:16px;color:#000;font-weight:400;text-align:right;">2</div>
<div class="t" style="left:82.5px;top:386.96px;font-size:16px;color:#000;font-weight:400;letter-spacing:0.2px">Яндекс РСЯ</div>
<div class="t" style="left:347.4px;top:374.96px;font-size:16px;color:#000;font-weight:400;letter-spacing:0.2px">Генеральная</div>
<div class="t" style="left:347.4px;top:398.96px;font-size:16px;color:#000;font-weight:400;letter-spacing:0.2px">уборка</div>
<div class="t" style="right:1253px;top:386.96px;font-size:16px;color:#000;font-weight:400;text-align:right;">8</div>
<div class="t" style="right:1137px;top:398.96px;font-size:16px;color:#000;font-weight:400;text-align:right;">45000</div>
<div class="t" style="right:990px;top:398.96px;font-size:16px;color:#000;font-weight:400;text-align:right;">5625</div>
<div class="t" style="right:1843.5px;top:434.96px;font-size:16px;color:#000;font-weight:400;text-align:right;">3</div>
<div class="t" style="left:82.5px;top:434.96px;font-size:16px;color:#000;font-weight:400;letter-spacing:0.2px">VK Таргет</div>
<div class="t" style="left:347.4px;top:422.96px;font-size:16px;color:#000;font-weight:400;letter-spacing:0.2px">После</div>
<div class="t" style="left:347.4px;top:446.96px;font-size:16px;color:#000;font-weight:400;letter-spacing:0.2px">ремонта</div>
<div class="t" style="right:1253px;top:434.96px;font-size:16px;color:#000;font-weight:400;text-align:right;">6</div>
<div class="t" style="right:1137px;top:446.96px;font-size:16px;color:#000;font-weight:400;text-align:right;">30000</div>
<div class="t" style="right:990px;top:446.96px;font-size:16px;color:#000;font-weight:400;text-align:right;">5000</div>
<div class="t" style="right:1843.5px;top:484.46px;font-size:16px;color:#000;font-weight:400;text-align:right;">4</div>
<div class="t" style="left:82.5px;top:484.46px;font-size:16px;color:#000;font-weight:400;letter-spacing:0.2px">MyTarget</div>
<div class="t" style="left:347.4px;top:484.46px;font-size:16px;color:#000;font-weight:400;letter-spacing:0.2px">Мытьё окон</div>
<div class="t" style="right:1253px;top:484.46px;font-size:16px;color:#000;font-weight:400;text-align:right;">7</div>
<div class="t" style="right:1137px;top:497.96px;font-size:16px;color:#000;font-weight:400;text-align:right;">25000</div>
<div class="t" style="right:990px;top:497.96px;font-size:16px;color:#000;font-weight:400;text-align:right;">3571,428571</div>
<div class="t" style="right:1843.5px;top:533.96px;font-size:16px;color:#000;font-weight:400;text-align:right;">5</div>
<div class="t" style="left:82.5px;top:533.96px;font-size:16px;color:#000;font-weight:400;letter-spacing:0.2px">Ретаргетинг Яндекс</div>
<div class="t" style="left:347.4px;top:521.96px;font-size:16px;color:#000;font-weight:400;letter-spacing:0.2px">Генеральная</div>
<div class="t" style="left:347.4px;top:545.96px;font-size:16px;color:#000;font-weight:400;letter-spacing:0.2px">уборка</div>
<div class="t" style="right:1253px;top:533.96px;font-size:16px;color:#000;font-weight:400;text-align:right;">5</div>
<div class="t" style="right:1137px;top:545.96px;font-size:16px;color:#000;font-weight:400;text-align:right;">20000</div>
<div class="t" style="right:990px;top:545.96px;font-size:16px;color:#000;font-weight:400;text-align:right;">4000</div>
<div class="t" style="right:1843.5px;top:584.46px;font-size:16px;color:#000;font-weight:400;text-align:right;">6</div>
<div class="t" style="left:82.5px;top:584.46px;font-size:16px;color:#000;font-weight:400;letter-spacing:0.2px">Яндекс Поиск</div>
<div class="t" style="left:347.4px;top:584.46px;font-size:16px;color:#000;font-weight:400;letter-spacing:0.2px">Мытьё окон</div>
<div class="t" style="right:1253px;top:584.46px;font-size:16px;color:#000;font-weight:400;text-align:right;">9</div>
<div class="t" style="right:1137px;top:598.96px;font-size:16px;color:#000;font-weight:400;text-align:right;">60000</div>
<div class="t" style="right:990px;top:598.96px;font-size:16px;color:#000;font-weight:400;text-align:right;">6666,666667</div>
<div class="t" style="right:1843.5px;top:642.46px;font-size:16px;color:#000;font-weight:400;text-align:right;">7</div>
<div class="t" style="left:82.5px;top:642.46px;font-size:16px;color:#000;font-weight:400;letter-spacing:0.2px">VK Таргет</div>
<div class="t" style="left:347.4px;top:642.46px;font-size:16px;color:#000;font-weight:400;letter-spacing:0.2px">Мытьё окон</div>
<div class="t" style="right:1253px;top:642.46px;font-size:16px;color:#000;font-weight:400;text-align:right;">4</div>
<div class="t" style="right:1137px;top:661.96px;font-size:16px;color:#000;font-weight:400;text-align:right;">30000</div>
<div class="t" style="right:990px;top:661.96px;font-size:16px;color:#000;font-weight:400;text-align:right;">7500</div>
<div class="t" style="right:1843.5px;top:703.96px;font-size:16px;color:#000;font-weight:400;text-align:right;">8</div>
<div class="t" style="left:82.5px;top:703.96px;font-size:16px;color:#000;font-weight:400;letter-spacing:0.2px">MyTarget</div>
<div class="t" style="left:347.4px;top:691.96px;font-size:16px;color:#000;font-weight:400;letter-spacing:0.2px">После</div>
<div class="t" style="left:347.4px;top:715.96px;font-size:16px;color:#000;font-weight:400;letter-spacing:0.2px">ремонта</div>
<div class="t" style="right:1253px;top:703.96px;font-size:16px;color:#000;font-weight:400;text-align:right;">3</div>
<div class="t" style="right:1137px;top:721.96px;font-size:16px;color:#000;font-weight:400;text-align:right;">25000</div>
<div class="t" style="right:990px;top:721.96px;font-size:16px;color:#000;font-weight:400;text-align:right;">8333,333333</div>
<div class="t" style="right:1843.5px;top:770.46px;font-size:16px;color:#000;font-weight:400;text-align:right;">9</div>
<div class="t" style="left:82.5px;top:770.46px;font-size:16px;color:#000;font-weight:400;letter-spacing:0.2px">Ретаргетинг VK</div>
<div class="t" style="left:347.4px;top:758.46px;font-size:16px;color:#000;font-weight:400;letter-spacing:0.2px">После</div>
<div class="t" style="left:347.4px;top:782.46px;font-size:16px;color:#000;font-weight:400;letter-spacing:0.2px">ремонта</div>
<div class="t" style="right:1253px;top:770.46px;font-size:16px;color:#000;font-weight:400;text-align:right;">2</div>
<div class="t" style="right:1137px;top:794.96px;font-size:16px;color:#000;font-weight:400;text-align:right;">15000</div>
<div class="t" style="right:990px;top:794.96px;font-size:16px;color:#000;font-weight:400;text-align:right;">7500</div>
<div class="t" style="right:1843.5px;top:836.96px;font-size:16px;color:#000;font-weight:400;text-align:right;">10</div>
<div class="t" style="left:82.5px;top:836.96px;font-size:16px;color:#000;font-weight:400;letter-spacing:0.2px">Яндекс РСЯ</div>
<div class="t" style="left:347.4px;top:836.96px;font-size:16px;color:#000;font-weight:400;letter-spacing:0.2px">Мытьё окон</div>
<div class="t" style="right:1253px;top:836.96px;font-size:16px;color:#000;font-weight:400;text-align:right;">11</div>
<div class="t" style="right:1137px;top:854.96px;font-size:16px;color:#000;font-weight:400;text-align:right;">45000</div>
<div class="t" style="right:990px;top:854.96px;font-size:16px;color:#000;font-weight:400;text-align:right;">4090,909091</div>
<div class="t" style="left:789.4px;top:350.96px;font-size:16px;color:#000;font-weight:400;">=ОКРУГЛ(<span style="color:#3a6ad4">E2</span>/<span style="color:#c0283a">D2</span>;0)</div>
<div class="a" style="left:452px;top:322px;width:217px;height:1px;background:#fff;"></div>
<div class="a" style="left:452px;top:368px;width:217px;height:1px;background:#fff;"></div>
<div class="a" style="left:451px;top:322px;width:1px;height:47px;background:#fff;"></div>
<div class="a" style="left:668px;top:322px;width:1px;height:47px;background:#fff;"></div>
<div class="a" style="left:671px;top:322px;width:112px;height:1px;background:#fff;"></div>
<div class="a" style="left:671px;top:368px;width:112px;height:1px;background:#fff;"></div>
<div class="a" style="left:671px;top:322px;width:1px;height:47px;background:#fff;"></div>
<div class="a" style="left:782px;top:322px;width:1px;height:47px;background:#fff;"></div>
<div class="a" style="left:454px;top:320px;width:212px;height:2px;background:#c42b3a;"></div>
<div class="a" style="left:454px;top:369px;width:212px;height:2px;background:#c42b3a;"></div>
<div class="a" style="left:449px;top:325px;width:2px;height:41px;background:#c42b3a;"></div>
<div class="a" style="left:669px;top:325px;width:2px;height:41px;background:#c42b3a;"></div>
<div class="a" style="left:673px;top:320px;width:109px;height:2px;background:#2f5fcc;"></div>
<div class="a" style="left:673px;top:369px;width:109px;height:2px;background:#2f5fcc;"></div>
<div class="a" style="left:789px;top:320px;width:145px;height:2px;background:#217346;"></div>
<div class="a" style="left:789px;top:369px;width:140px;height:2px;background:#217346;"></div>
<div class="a" style="left:784px;top:325px;width:2px;height:41px;background:#217346;"></div>
<div class="a" style="left:932px;top:320px;width:2px;height:46px;background:#217346;"></div>
<div class="a" style="left:447px;top:318px;width:7px;height:7px;background:#fff;"></div>
<div class="a" style="left:448px;top:319px;width:5px;height:5px;background:#c42b3a;"></div>
<div class="a" style="left:666px;top:318px;width:7px;height:7px;background:#fff;"></div>
<div class="a" style="left:667px;top:319px;width:5px;height:5px;background:#c42b3a;"></div>
<div class="a" style="left:447px;top:366px;width:7px;height:7px;background:#fff;"></div>
<div class="a" style="left:448px;top:367px;width:5px;height:5px;background:#c42b3a;"></div>
<div class="a" style="left:666px;top:366px;width:7px;height:7px;background:#fff;"></div>
<div class="a" style="left:667px;top:367px;width:5px;height:5px;background:#c42b3a;"></div>
<div class="a" style="left:782px;top:318px;width:7px;height:7px;background:#fff;"></div>
<div class="a" style="left:783px;top:319px;width:5px;height:5px;background:#2f5fcc;"></div>
<div class="a" style="left:782px;top:366px;width:7px;height:7px;background:#fff;"></div>
<div class="a" style="left:783px;top:367px;width:5px;height:5px;background:#2f5fcc;"></div>
<div class="a" style="left:929px;top:366px;width:7px;height:7px;background:#fff;"></div>
<div class="a" style="left:930px;top:367px;width:5px;height:5px;background:#217346;"></div>
<div class="a" style="left:927px;top:347px;width:1px;height:22px;background:#000;"></div>
<div class="a" style="left:1895px;top:250px;width:24px;height:711px;background:#e6e6e6;"></div>
<div class="a" style="left:1898px;top:271px;width:19px;height:544px;background:#fff;border:1px solid #a0a0a0"></div>
<div class="a" style="left:1898px;top:815px;width:19px;height:128px;background:#f0f0f0;"></div>
<div class="a" style="left:1898px;top:252px;width:19px;height:19px;background:#fff;border:1px solid #a0a0a0"></div>
<svg style="left:1903px;top:258px" width="9" height="5"><path d="M0 5H9L4.5 0Z" fill="#222"/></svg>
<div class="a" style="left:1898px;top:943px;width:19px;height:19px;background:#fff;border:1px solid #a0a0a0"></div>
<svg style="left:1903px;top:951px" width="9" height="5"><path d="M0 0H9L4.5 5Z" fill="#222"/></svg>
<div class="a" style="left:0px;top:962px;width:1919px;height:31px;background:#e6e6e6;"></div>
<div class="a" style="left:0px;top:993px;width:1919px;height:2px;background:#f3f3f3;"></div>
<div class="a" style="left:0px;top:993px;width:1919px;height:1px;background:#c8c8c8;"></div>
<svg style="left:29px;top:973px" width="6" height="9"><path d="M5 0V9L0 4.5Z" fill="#c0c0c0"/></svg>
<svg style="left:61px;top:973px" width="6" height="9"><path d="M0 0V9L5 4.5Z" fill="#c0c0c0"/></svg>
<div class="a" style="left:112px;top:961px;width:85px;height:28px;background:#fff;border-left:1px solid #ababab;border-right:1px solid #ababab"></div>
<div class="a" style="left:112px;top:988px;width:85px;height:2px;background:#217346;"></div>
<div class="a" style="left:0px;top:961px;width:112px;height:1px;background:#a0a0a0;"></div>
<div class="a" style="left:197px;top:961px;width:1698px;height:1px;background:#a0a0a0;"></div>
<div class="t" style="left:-245.5px;width:800px;top:968.20px;font-size:16.3px;color:#217346;font-weight:700;text-align:center;">Заказы</div>
<div class="t" style="left:211px;top:968.46px;font-size:16px;color:#444;font-weight:400;">Реклама</div>
<div class="a" style="left:290px;top:965px;width:1px;height:23px;background:#ababab;"></div>
<svg style="left:327px;top:967px" width="21" height="21"><circle cx="10.5" cy="10.5" r="9.5" fill="none" stroke="#777" stroke-width="1.3"/><path d="M10.5 5V16M5 10.5H16" stroke="#777" stroke-width="1.6"/></svg>
<div class="a" style="left:1150px;top:971px;width:3px;height:3px;background:#b0b0b0;"></div>
<div class="a" style="left:1150px;top:976px;width:3px;height:3px;background:#b0b0b0;"></div>
<div class="a" style="left:1150px;top:981px;width:3px;height:3px;background:#b0b0b0;"></div>
<div class="a" style="left:1170px;top:968px;width:19px;height:19px;background:#fff;border:1px solid #a0a0a0"></div>
<svg style="left:1176px;top:973px" width="6" height="9"><path d="M5 0V9L0 4.5Z" fill="#222"/></svg>
<div class="a" style="left:1188px;top:968px;width:649px;height:19px;background:#fff;border:1px solid #a0a0a0"></div>
<div class="a" style="left:1837px;top:969px;width:39px;height:17px;background:#f0f0f0;"></div>
<div class="a" style="left:1876px;top:968px;width:19px;height:19px;background:#fff;border:1px solid #a0a0a0"></div>
<svg style="left:1883px;top:973px" width="6" height="9"><path d="M0 0V9L5 4.5Z" fill="#222"/></svg>
</body></html>
